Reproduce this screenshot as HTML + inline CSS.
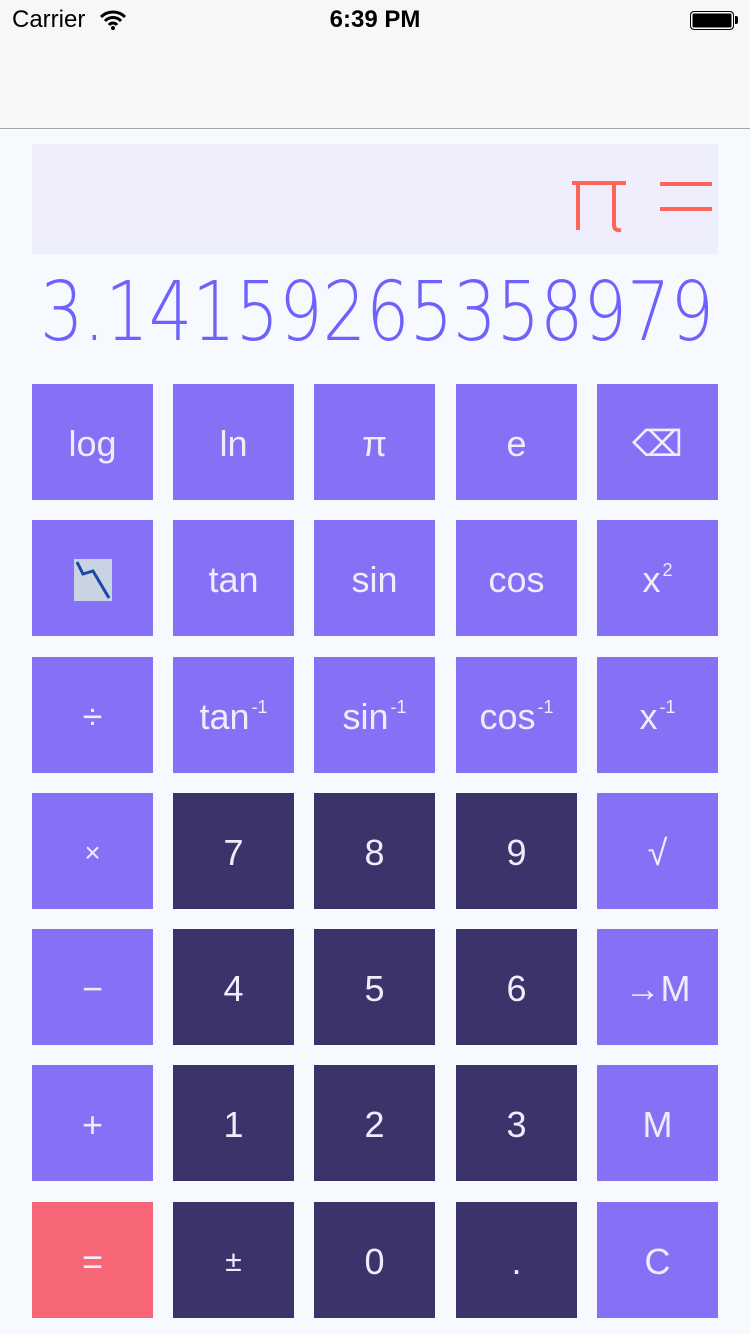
<!DOCTYPE html>
<html><head><meta charset="utf-8"><style>
body{margin:0;width:750px;height:1334px;background:#f6f9fe;font-family:"Liberation Sans",sans-serif;position:relative;overflow:hidden}
.nav{position:absolute;left:0;top:0;width:750px;height:128px;background:#f7f7f7;border-bottom:1px solid #a8a8ac}
.b{position:absolute;width:121px;height:116px;box-sizing:border-box;padding-top:4px;background:#8670f5;color:#f0ecfc;font-size:36px;display:flex;align-items:center;justify-content:center}
.d{background:#3b3369}
.r{background:#f76676}
sup{font-size:18px;position:relative;top:-10px;vertical-align:top;margin-left:2px}
</style></head><body>
<div class="nav">
<div style="position:absolute;left:12px;top:6px;font-size:24px;color:#000">Carrier</div>
<svg style="position:absolute;left:100px;top:10px" width="26" height="20" viewBox="0 0 26 20"><path d="M1 7a17 17 0 0 1 24 0M5 11a11 11 0 0 1 16 0M9 15a5 5 0 0 1 8 0" stroke="#000" stroke-width="3" fill="none"/><circle cx="13" cy="18" r="2" fill="#000"/></svg>
<div style="position:absolute;left:0;width:750px;top:6px;text-align:center;font-size:24px;font-weight:bold;color:#000">6:39 PM</div>
<div style="position:absolute;left:690px;top:11px;width:42px;height:17px;border:1.5px solid #000;border-radius:4px;background:#000;box-shadow:inset 0 0 0 1.5px #fff"></div>
<div style="position:absolute;left:735px;top:16px;width:3px;height:8px;background:#000;border-radius:0 2px 2px 0"></div>
</div>
<div style="position:absolute;left:32px;top:144px;width:686px;height:110px;background:#efeefd"></div>
<svg style="position:absolute;left:0;top:140px" width="750" height="220">
<rect x="572" y="41" width="54" height="4" fill="#fe6556"/>
<rect x="576" y="41" width="4" height="49" fill="#fe6556"/>
<path d="M614 41v44q0 6 7 5" stroke="#fe6556" stroke-width="4" fill="none"/>
<rect x="660" y="42" width="52" height="4" fill="#fe6556"/><rect x="660" y="67" width="52" height="4" fill="#fe6556"/>
<text x="40" y="200" font-family="DejaVu Sans ExtraLight, DejaVu Sans, Liberation Sans, sans-serif" font-weight="200" font-size="82" fill="#6d62fd" textLength="674" lengthAdjust="spacingAndGlyphs">3.14159265358979</text>
</svg>
<div class="b" style="left:32px;top:384px">log</div>
<div class="b" style="left:173px;top:384px">ln</div>
<div class="b" style="left:314px;top:384px">π</div>
<div class="b" style="left:456px;top:384px">e</div>
<div class="b" style="left:597px;top:384px">⌫</div>
<div class="b" style="left:32px;top:520px"><svg width="38" height="42"><rect width="38" height="42" fill="#c8d4e2"/><path d="M3 3l6 12 10-3 16 27" stroke="#1b47a8" stroke-width="3" fill="none"/></svg></div>
<div class="b" style="left:173px;top:520px">tan</div>
<div class="b" style="left:314px;top:520px">sin</div>
<div class="b" style="left:456px;top:520px">cos</div>
<div class="b" style="left:597px;top:520px">x<sup>2</sup></div>
<div class="b" style="left:32px;top:657px">÷</div>
<div class="b" style="left:173px;top:657px">tan<sup>-1</sup></div>
<div class="b" style="left:314px;top:657px">sin<sup>-1</sup></div>
<div class="b" style="left:456px;top:657px">cos<sup>-1</sup></div>
<div class="b" style="left:597px;top:657px">x<sup>-1</sup></div>
<div class="b" style="left:32px;top:793px;font-size:28px">×</div>
<div class="b d" style="left:173px;top:793px">7</div>
<div class="b d" style="left:314px;top:793px">8</div>
<div class="b d" style="left:456px;top:793px">9</div>
<div class="b" style="left:597px;top:793px">√</div>
<div class="b" style="left:32px;top:929px">−</div>
<div class="b d" style="left:173px;top:929px">4</div>
<div class="b d" style="left:314px;top:929px">5</div>
<div class="b d" style="left:456px;top:929px">6</div>
<div class="b" style="left:597px;top:929px">→M</div>
<div class="b" style="left:32px;top:1065px">+</div>
<div class="b d" style="left:173px;top:1065px">1</div>
<div class="b d" style="left:314px;top:1065px">2</div>
<div class="b d" style="left:456px;top:1065px">3</div>
<div class="b" style="left:597px;top:1065px">M</div>
<div class="b r" style="left:32px;top:1202px">=</div>
<div class="b d" style="left:173px;top:1202px;font-size:30px">±</div>
<div class="b d" style="left:314px;top:1202px">0</div>
<div class="b d" style="left:456px;top:1202px">.</div>
<div class="b" style="left:597px;top:1202px">C</div>
</body></html>
